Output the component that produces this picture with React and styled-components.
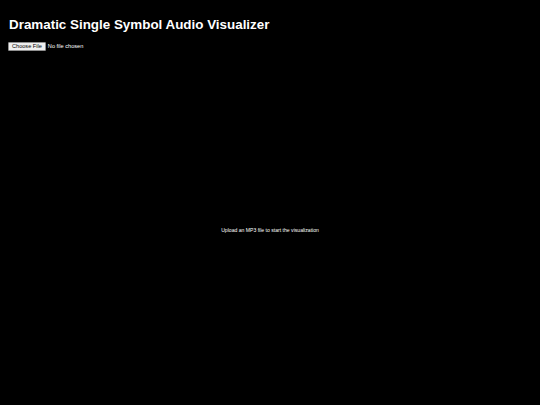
import React from 'react'
import styled, { createGlobalStyle } from 'styled-components'

const GlobalStyle = createGlobalStyle`
  html, body, #root {
    height: 100%;
  }
  body {
    margin: 0;
    background: #000;
    color: #fff;
    font-family: "Liberation Sans", Arial, sans-serif;
  }
`

function App() {
  return (
    <Page>
      <GlobalStyle />
      <Header>
        <Title>Dramatic Single Symbol Audio Visualizer</Title>
        <FileInput type="file" accept="audio/mp3" />
      </Header>
      <Stage>
        <Message>Upload an MP3 file to start the visualization</Message>
      </Stage>
    </Page>
  )
}

export default App

const Page = styled.div`
  height: 100%;
  display: flex;
  flex-direction: column;
`

const Header = styled.div`
  padding: 17px 8px 4px;
  display: flex;
  flex-direction: column;
  align-items: flex-start;
  gap: 9px;
`

const Title = styled.h1`
  margin: 0 0 0 1px;
  font-size: 13.4px;
  font-weight: 700;
  line-height: 16px;
`

const FileInput = styled.input`
  font-size: 5.6px;
  line-height: 7px;
  color: #fff;
  font-family: "Liberation Sans", Arial, sans-serif;

  &::file-selector-button {
    font-size: 5.6px;
    line-height: 7px;
    font-family: "Liberation Sans", Arial, sans-serif;
    padding: 0 3px;
    margin-right: 2px;
    border: 1px solid #8f8f8f;
    border-radius: 1px;
    background: #efefef;
    color: #000;
  }
`

const Stage = styled.div`
  flex: 1;
  display: flex;
  align-items: center;
  justify-content: center;
`

const Message = styled.div`
  font-size: 5.1px;
`
